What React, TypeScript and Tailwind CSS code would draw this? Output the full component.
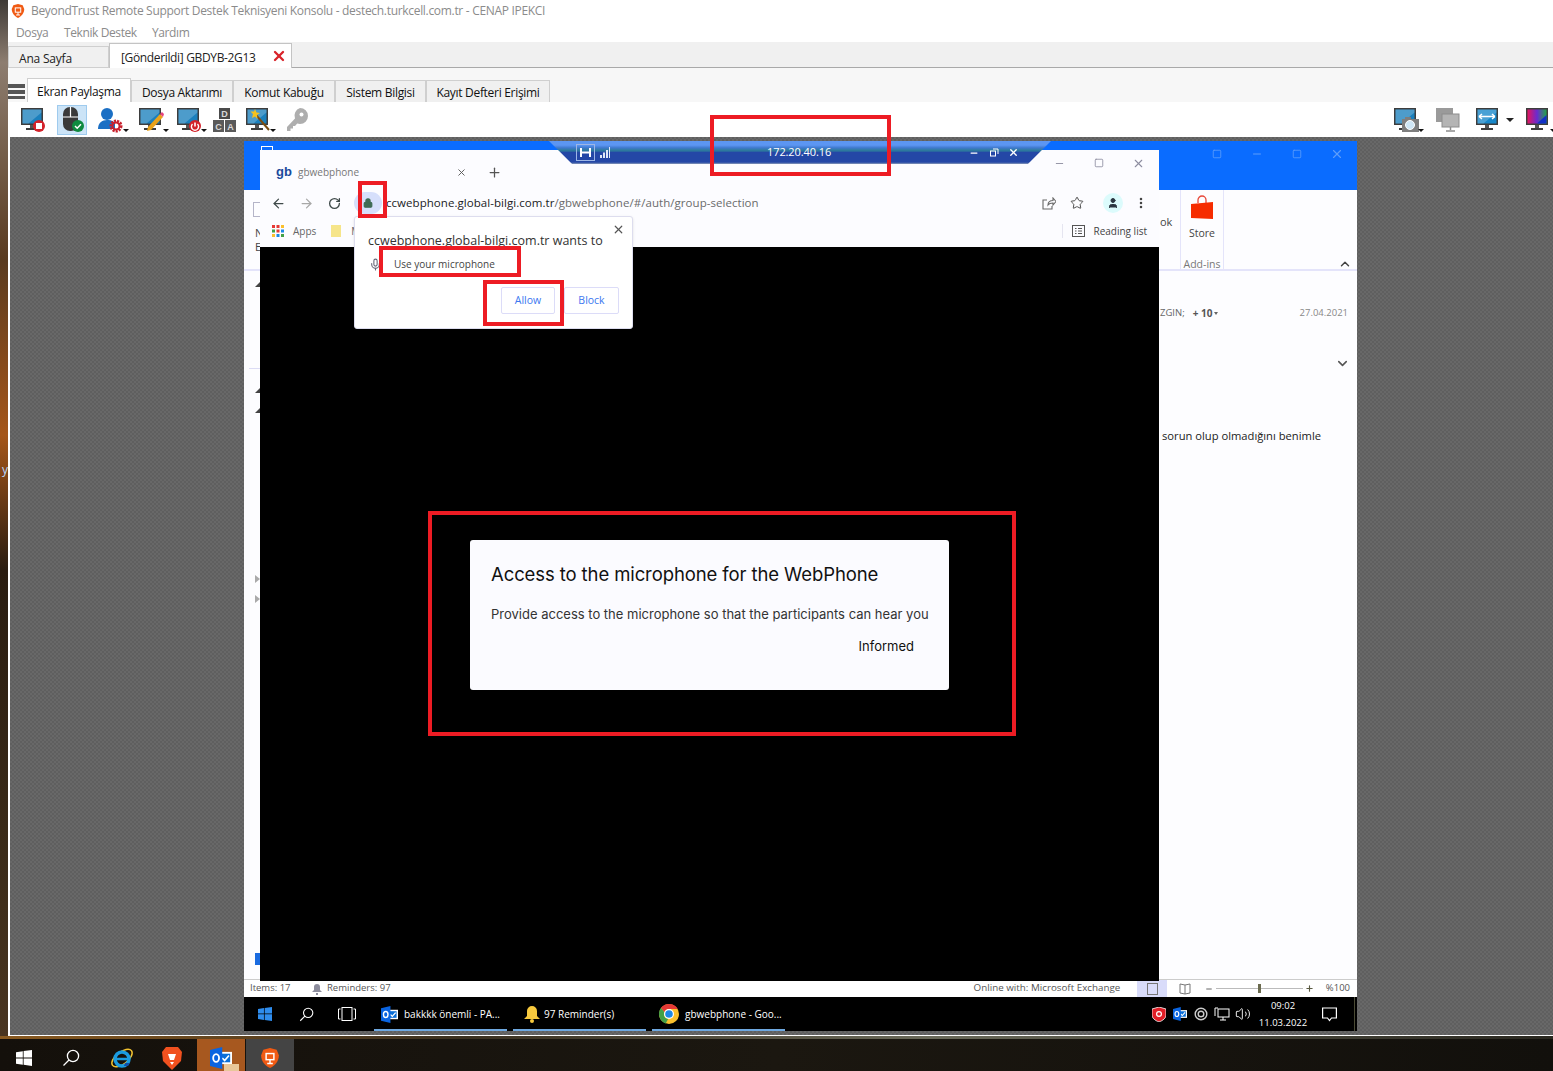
import type { ReactNode } from "react";
import { ArrowLeft, ArrowRight, ChevronDown, ChevronUp, Lock, Mic, Minus, MoreVertical, Plus, RotateCw, Square, Star, User, Volume2, X } from "lucide-react";

/* ---------- small drawings ---------- */

function Caret() {
  return <span className="absolute bottom-[3px] right-[-3px] h-0 w-0 border-x-[3px] border-t-[3px] border-x-transparent border-t-[#111]" />;
}

function Monitor({ children, screen = "#1b80bd" }: { children?: ReactNode; screen?: string }) {
  return (
    <svg width="26" height="26" viewBox="0 0 26 26">
      <rect x="1" y="1" width="22" height="17" fill="#3d3d3d" />
      <rect x="2.5" y="2.5" width="19" height="14" fill={screen} />
      <path d="M2.5 2.5h19v3l-13 11h-6z" fill="#fff" opacity=".22" />
      <rect x="10" y="18" width="4" height="3" fill="#555" />
      <rect x="6" y="21" width="12" height="2" fill="#3d3d3d" />
      {children}
    </svg>
  );
}

function WinLogo({ color, size = 16 }: { color: string; size?: number }) {
  return (
    <svg width={size} height={size} viewBox="0 0 16 16" fill={color}>
      <path d="M0 2.2 6.8 1.2v6.3H0zM7.6 1.1 16 0v7.5H7.6zM0 8.4h6.8v6.4L0 13.8zM7.6 8.4H16V16l-8.4-1.2z" />
    </svg>
  );
}

function SearchGlass({ size = 16 }: { size?: number }) {
  return (
    <svg width={size} height={size} viewBox="0 0 18 18" fill="none" stroke="#fff" strokeWidth="1.3">
      <circle cx="11" cy="7" r="5.6" />
      <path d="M7 11 1.5 16.5" />
    </svg>
  );
}

function OutlookLogo({ size = 18 }: { size?: number }) {
  return (
    <svg width={size} height={size} viewBox="0 0 18 18">
      <rect x="7" y="4" width="11" height="10" fill="#fff" />
      <rect x="8.5" y="5.5" width="8" height="7" fill="#0a6fd8" />
      <path d="m10 9 2 2 3.5-4" fill="none" stroke="#fff" strokeWidth="1.4" />
      <path d="M0 2.5 10 0v18L0 15.5z" fill="#0a64e0" />
      <ellipse cx="5" cy="9" rx="2.4" ry="3.2" fill="none" stroke="#fff" strokeWidth="1.5" />
    </svg>
  );
}

function ChromeLogo() {
  return (
    <svg width="20" height="20" viewBox="0 0 20 20">
      <circle cx="10" cy="10" r="10" fill="#fbc02d" />
      <path d="M10 0a10 10 0 0 1 8.7 5H10a5 5 0 0 0-4.6 3L1.9 4.1A10 10 0 0 1 10 0z" fill="#e53935" />
      <path d="M1.9 4.1 5.4 8a5 5 0 0 0 3.7 7l-2.4 4.4A10 10 0 0 1 1.9 4.1z" fill="#43a047" />
      <circle cx="10" cy="10" r="5" fill="#fff" />
      <circle cx="10" cy="10" r="3.8" fill="#1e88e5" />
    </svg>
  );
}

function BeyondShield({ size = 16, color = "#f05a13" }: { size?: number; color?: string }) {
  return (
    <svg width={size} height={size} viewBox="0 0 16 18">
      <path d="M2 1.5 8 0l6 1.5 2 5c0 5-3 9-8 11.5-5-2.5-8-6.500-8-11.500z" fill={color} />
      <rect x="4.500" y="5" width="7" height="5.500" fill="none" stroke="#fff" strokeWidth="1.300" />
      <path d="M8 10.500v3M5.500 14h5" stroke="#fff" strokeWidth="1.300" />
    </svg>
  );
}

function ToolIcon({ children, caret, active, dim }: { children: ReactNode; caret?: boolean; active?: boolean; dim?: boolean }) {
  return (
    <span className={`relative flex h-[30px] w-[30px] items-center justify-center ${active ? "border border-[#9fcbee] bg-[#cce4f7]" : ""} ${dim ? "opacity-90" : ""}`}>
      {children}
      {caret && <Caret />}
    </span>
  );
}

const RedBadge = ({ children }: { children: ReactNode }) => (
  <>
    <circle cx="19" cy="19" r="6" fill="#d3222a" />
    {children}
  </>
);

function Annotation({ className }: { className: string }) {
  return <div className={`pointer-events-none absolute z-30 border-[4px] border-[#ed1c24] ${className}`} />;
}

/* ---------- console chrome ---------- */

const featureTabs = [
  { label: "Dosya Aktarımı", w: "w-[102px]" },
  { label: "Komut Kabuğu", w: "w-[102px]" },
  { label: "Sistem Bilgisi", w: "w-[91px]" },
  { label: "Kayıt Defteri Erişimi", w: "w-[124px]" },
];

function ConsoleHeader() {
  return (
    <>
      <div className="flex h-[21px] items-center gap-[6px] bg-white pl-[3px] text-[12px] text-[#8b8b8b]">
        <BeyondShield size={14} />
        <span className="tracking-[-0.31px]">BeyondTrust Remote Support Destek Teknisyeni Konsolu - destech.turkcell.com.tr - CENAP IPEKCI</span>
      </div>
      <div className="flex h-[21px] items-center bg-white pl-[8px] pt-[3px] text-[12px] tracking-[-0.4px] text-[#8b8b8b]">
        <span className="w-[48px]">Dosya</span>
        <span className="w-[88px]">Teknik Destek</span>
        <span>Yardım</span>
      </div>
      <div className="flex h-[26px] items-end border-b border-[#a9a9a9] bg-[#f0f0f0] text-[12px] text-[#222]">
        <div className="mb-[-1px] flex h-[22px] w-[101px] items-center border border-[#cfcfcf] bg-[#f0f0f0] pl-[10px] pt-[3px] tracking-[-0.2px]">Ana Sayfa</div>
        <div className="mb-[-1px] flex h-[25px] w-[183px] items-center whitespace-nowrap border border-b-0 border-[#c4c4c4] bg-white pl-[11px] pt-[3px] tracking-[-0.35px]">
          <span>[Gönderildi] GBDYB-2G13</span>
          <X size={16} strokeWidth={3.5} className="ml-[16px] -translate-y-[2px] text-[#d8232a]" />
        </div>
      </div>
      <div className="flex h-[34px] items-end bg-[#f7f7f7] text-[12px] tracking-[-0.3px] text-[#111]">
        <div className="mb-[3px] mr-[2px] flex w-[17px] flex-col gap-[2px]">
          <span className="h-[4px] bg-[#555]" />
          <span className="h-[4px] bg-[#555]" />
          <span className="h-[3px] bg-[#555]" />
        </div>
        <div className="flex h-[24px] w-[104px] items-center justify-center border border-b-0 border-[#cfcfcf] bg-white pt-[2px]">Ekran Paylaşma</div>
        {featureTabs.map((t) => (
          <div key={t.label} className={`flex h-[22px] items-center justify-center border border-b-0 border-[#cfcfcf] bg-[#f0f0f0] pt-[2px] ${t.w}`}>
            {t.label}
          </div>
        ))}
      </div>
    </>
  );
}

function Toolbar() {
  return (
    <div className="flex h-[35px] items-center bg-white pl-[10px]">
      <div className="flex items-center">
        <ToolIcon>
          <Monitor>
            <circle cx="19" cy="19" r="6" fill="#d3222a" />
            <rect x="16" y="16" width="6" height="6" fill="#fff" />
          </Monitor>
        </ToolIcon>
        <span className="w-[9px]" />
        <ToolIcon active>
          <svg width="26" height="28" viewBox="0 0 26 28">
            <rect x="4" y="1" width="15" height="24" rx="7" fill="#3a3a3a" />
            <path d="M4 11h15M11.500 1v10" stroke="#fff" strokeWidth="1.200" />
            <circle cx="19" cy="20" r="6" fill="#0f8a3f" />
            <path d="m16 20 2.200 2.200 3.800-4" stroke="#fff" strokeWidth="1.500" fill="none" />
          </svg>
        </ToolIcon>
        <span className="w-[9px]" />
        <ToolIcon caret>
          <svg width="28" height="26" viewBox="0 0 28 26">
            <circle cx="10" cy="7" r="6" fill="#1b6fc4" />
            <path d="M1 22c0-6 4-9 9-9s8 2 8 4v5z" fill="#1b6fc4" />
            <circle cx="19" cy="19" r="5" fill="none" stroke="#c8202c" strokeWidth="3" strokeDasharray="2 1" />
            <circle cx="19" cy="19" r="3.500" fill="none" stroke="#c8202c" strokeWidth="2" />
          </svg>
        </ToolIcon>
        <span className="w-[10px]" />
        <ToolIcon caret>
          <Monitor>
            <path d="m9 24 1-4 12-13 3 3-12 13z" fill="#e9a21a" />
            <path d="m22 7 2-2 2 2-1 3z" fill="#e6457f" />
          </Monitor>
        </ToolIcon>
        <span className="w-[8px]" />
        <ToolIcon caret>
          <Monitor>
            <RedBadge>
              <path d="M19 15.500v4" stroke="#fff" strokeWidth="1.600" />
              <path d="M16.500 17a3.600 3.600 0 1 0 5 0" stroke="#fff" strokeWidth="1.400" fill="none" />
            </RedBadge>
          </Monitor>
        </ToolIcon>
        <span className="w-[5px]" />
        <ToolIcon>
          <svg width="26" height="26" viewBox="0 0 26 26" fontFamily="Liberation Sans" fontSize="9" fontWeight="700" fill="#d8d8d8" textAnchor="middle">
            <rect x="8" y="1" width="11" height="11" fill="#4a4a4a" />
            <rect x="2" y="13" width="11" height="12" fill="#5a5a5a" />
            <rect x="14" y="13" width="11" height="12" fill="#5a5a5a" />
            <text x="13.500" y="10">D</text>
            <text x="7.500" y="23">C</text>
            <text x="19.500" y="23">A</text>
          </svg>
        </ToolIcon>
        <span className="w-[4px]" />
        <ToolIcon caret>
          <Monitor>
            <path d="m11 8 13 15" stroke="#7a4d12" strokeWidth="2" />
            <path d="m10 2 1.500 3.500L15 6l-3 2 .5 4-2.500-2.500L7 11l1-4-2.500-2.500L9 4.500z" fill="#f6c21c" />
          </Monitor>
        </ToolIcon>
        <span className="w-[9px]" />
        <ToolIcon dim>
          <svg width="24" height="26" viewBox="0 0 24 26" fill="#a6a6a6">
            <path d="M15 1a8 8 0 0 1 0 16c-1 0-2-.2-2.800-.5L10 19H8v2.500H5.500V24H2v-4l8-8.500A8 8 0 0 1 15 1z" />
            <circle cx="16.500" cy="7.500" r="2" fill="#fff" />
          </svg>
        </ToolIcon>
      </div>
      <div className="ml-auto flex items-center">
        <ToolIcon caret>
          <Monitor>
            <rect x="9" y="12" width="17" height="13" fill="#7e7e7e" />
            <rect x="12" y="10" width="6" height="3" fill="#7e7e7e" />
            <circle cx="17" cy="18" r="4.500" fill="#cfe6f5" stroke="#fff" />
          </Monitor>
        </ToolIcon>
        <span className="w-[12px]" />
        <ToolIcon>
          <svg width="26" height="26" viewBox="0 0 26 26">
            <rect x="1" y="1" width="17" height="14" fill="#9a9a9a" />
            <rect x="7" y="7" width="17" height="13" fill="#b4b4b4" stroke="#8c8c8c" />
            <path d="M15.500 20v3M11 24h9" stroke="#8c8c8c" strokeWidth="1.500" />
          </svg>
        </ToolIcon>
        <span className="w-[10px]" />
        <ToolIcon>
          <Monitor screen="#1787c9">
            <path d="M4 9.500h16M4 9.500l3-2.500M4 9.500l3 2.500M20 9.500l-3-2.500M20 9.500l-3 2.500" stroke="#fff" strokeWidth="1.500" fill="none" />
          </Monitor>
        </ToolIcon>
        <span className="ml-[3px] mr-[9px] h-0 w-0 border-x-[4px] border-t-[4px] border-x-transparent border-t-[#222]" />
        <ToolIcon caret>
          <svg width="26" height="26" viewBox="0 0 26 26">
            <defs>
              <linearGradient id="rainbow" x1="0" x2="1" y1="0" y2="0">
                <stop offset="0" stopColor="#e6135e" />
                <stop offset=".5" stopColor="#6a2bd0" />
                <stop offset="1" stopColor="#1fa64a" />
              </linearGradient>
            </defs>
            <rect x="1" y="1" width="22" height="17" fill="#3d3d3d" />
            <rect x="2.500" y="2.500" width="19" height="14" fill="url(#rainbow)" />
            <path d="M12 16.500 21.500 8v8.500z" fill="#1130c8" />
            <rect x="10" y="18" width="4" height="3" fill="#555" />
            <rect x="6" y="21" width="12" height="2" fill="#3d3d3d" />
          </svg>
        </ToolIcon>
      </div>
    </div>
  );
}

/* ---------- remote desktop: outlook behind, chrome on top ---------- */

function OutlookBackdrop() {
  return (
    <>
      <div className="relative flex h-[49px] bg-[#0a6cff] pl-[961px] text-[#5d9dfa]">
        <span className="absolute left-[17px] top-[5px] h-[5px] w-[12px] border border-white" />
        <div className="flex h-[26px] w-full items-center">
          <span className="flex w-[24px] justify-center"><Square size={10} /></span>
          <span className="ml-[16px] flex w-[24px] justify-center"><Minus size={12} /></span>
          <span className="ml-[16px] flex w-[24px] justify-center"><Square size={10} /></span>
          <span className="ml-[16px] flex w-[24px] justify-center"><X size={14} /></span>
        </div>
      </div>
      <div className="relative flex h-[81px] border-b-2 border-[#e4e4fa] bg-[#fdfdff] pl-[916px] text-[10.5px] leading-[14px] text-[#555]">
        <span className="absolute left-[9px] top-[12px] h-[15px] w-[8px] border border-[#b5b5c8]" />
        <span className="absolute left-[11px] top-[36px] text-[11px] leading-[14px] text-[#444]">N<br />E</span>
        <div className="w-[20px] pt-[25px] text-[11px] text-[#444]">ok</div>
        <div className="flex w-[44px] flex-col items-center border-x border-[#e4e4fa] pt-[5px]">
          <svg width="24" height="26" viewBox="0 0 24 26" className="shrink-0">
            <path d="M8 8V5a4 4 0 0 1 8 0v3" fill="none" stroke="#e8483a" strokeWidth="1.300" />
            <path d="M1 9l22-2v17l-22-1z" fill="#f62c00" />
          </svg>
          <span className="mt-[5px] text-[#444]">Store</span>
          <span className="mt-[17px] whitespace-nowrap text-[#777]">Add-ins</span>
        </div>
        <ChevronUp size={14} strokeWidth={2.5} className="ml-auto mr-[5px] mt-[67px] text-[#444]" />
      </div>
      <div className="relative flex flex-1 flex-col bg-[#fdfdff] pl-[916px] pr-[9px] pt-[35px]">
        <span className="absolute left-[5px] right-[1097px] top-[97px] h-px bg-[#dcdcf5]" />
        <span className="absolute left-[11px] top-[11px] h-0 w-0 border-x-[5px] border-b-[5px] border-x-transparent border-b-[#444]" />
        <span className="absolute left-[11px] top-[117px] h-0 w-0 border-x-[5px] border-b-[5px] border-x-transparent border-b-[#444]" />
        <span className="absolute left-[11px] top-[137px] h-0 w-0 border-x-[5px] border-b-[5px] border-x-transparent border-b-[#444]" />
        <span className="absolute left-[11px] top-[304px] h-0 w-0 border-y-[4px] border-l-[5px] border-y-transparent border-l-[#aaa]" />
        <span className="absolute left-[11px] top-[324px] h-0 w-0 border-y-[4px] border-l-[5px] border-y-transparent border-l-[#aaa]" />
        <span className="absolute left-[11px] top-[682px] h-[12px] w-[6px] bg-[#1a6be0]" />
        <div className="flex h-[14px] items-center text-[9.5px] text-[#666]">
          <span>ZGIN;</span>
          <span className="ml-[8px] text-[10px] font-bold text-[#555]">+ 10</span>
          <span className="ml-[2px] h-0 w-0 border-x-[2.500px] border-t-[3px] border-x-transparent border-t-[#666]" />
          <span className="ml-auto text-[#888]">27.04.2021</span>
        </div>
        <ChevronDown size={15} strokeWidth={2.5} className="mt-[36px] -mr-[2px] self-end text-[#555]" />
        <div className="ml-[2px] mt-[57px] whitespace-nowrap text-[11.2px] leading-[16px] text-[#222]">sorun olup olmadığını benimle</div>
      </div>
      <div className="flex h-[18px] items-center border-t border-[#ccc] bg-white pl-[6px] text-[9.500px] text-[#555]">
        <span className="w-[62px]">Items: 17</span>
        <svg width="10" height="12" viewBox="0 0 10 12" fill="#8c8c9c" className="mr-[5px]"><path d="M5 1a3 3 0 0 1 3 3v3l2 2H0l2-2V4a3 3 0 0 1 3-3zM4 10h2v2H4z" /></svg>
        <span>Reminders: 97</span>
        <span className="ml-[583px] w-[146px] whitespace-nowrap text-[9.800px]">Online with: Microsoft Exchange</span>
        <span className="ml-[17px] flex h-[17px] w-[30px] items-center justify-center bg-[#d9dcfa]">
          <span className="ml-[2px] h-[12px] w-[11px] border border-[#777]" />
        </span>
        <svg width="12" height="12" viewBox="0 0 12 12" fill="none" stroke="#777" className="ml-[12px]"><path d="M6 2 1 1v9l5 1 5-1V1zM6 2v9" /></svg>
        <Minus size={8} strokeWidth={3} className="ml-[14px] text-[#666]" />
        <span className="relative ml-[3px] h-px w-[87px] bg-[#bbb]">
          <span className="absolute left-[42px] top-[-4px] h-[9px] w-[3px] bg-[#6b6b4f]" />
        </span>
        <Plus size={9} strokeWidth={3} className="ml-[2px] text-[#5a5a42]" />
        <span className="ml-auto pr-[7px]">%100</span>
      </div>
      <RemoteTaskbar />
    </>
  );
}

const remoteApps = [
  { label: "bakkkk önemli - PA...", w: "w-[133px]", icon: <OutlookLogo size={17} />, gap: "gap-[6px]" },
  {
    label: "97 Reminder(s)",
    w: "w-[133px]",
    gap: "gap-[3px]",
    icon: (
      <svg width="18" height="18" viewBox="0 0 18 18" fill="#f7c93e" className="ml-[3px]"><path d="M9 1a5 5 0 0 1 5 5v5l3 3H1l3-3V6a5 5 0 0 1 5-5z" /><circle cx="9" cy="16" r="2" /></svg>
    ),
  },
  { label: "gbwebphone - Goo...", w: "w-[133px]", icon: <ChromeLogo />, gap: "gap-[6px]" },
];

function RemoteTaskbar() {
  return (
    <div className="flex h-[34px] items-center bg-black pl-[14px] text-[10px] text-white">
      <WinLogo color="#2f8dee" size={14} />
      <span className="ml-[27px]"><SearchGlass size={15} /></span>
      <svg width="18" height="14" viewBox="0 0 18 14" fill="none" stroke="#fff" className="ml-[24px]"><rect x="4" y=".5" width="10" height="13" /><path d="M2.500 2H.500v10h2M15.500 2h2v10h-2" /></svg>
      <div className="ml-[18px] flex">
        {remoteApps.map((a, i) => (
          <div key={a.label} className={`flex h-[34px] items-center border-b-2 border-[#6ea8e0] pl-[7px] pt-[2px] ${a.gap} ${a.w} ${i > 0 ? "ml-[6px]" : ""}`}>
            {a.icon}
            <span className="whitespace-nowrap">{a.label}</span>
          </div>
        ))}
      </div>
      <div className="ml-auto flex items-center">
        <svg width="14" height="15" viewBox="0 0 14 15"><path d="M0 2 7 0l7 2v6c0 3-3 5.500-7 7-4-1.500-7-4-7-7z" fill="#e01e26" stroke="#fff" strokeWidth=".8" /><circle cx="7" cy="7" r="3" fill="#fff" /><circle cx="7" cy="7" r="1.800" fill="#e01e26" /></svg>
        <span className="ml-[7px]"><OutlookLogo size={14} /></span>
        <svg width="14" height="14" viewBox="0 0 14 14" fill="none" stroke="#ccc" strokeWidth="1.400" className="ml-[7px]"><circle cx="7" cy="7" r="5.800" /><circle cx="7" cy="7" r="2.800" /></svg>
        <svg width="16" height="14" viewBox="0 0 16 14" fill="none" stroke="#fff" className="ml-[6px]"><rect x="4" y="2" width="11" height="8" /><path d="M1 1h3M1 1v8M9 10v3M6 13h6" /></svg>
        <Volume2 size={16} strokeWidth={1.400} className="ml-[5px]" />
        <div className="ml-[8px] flex w-[48px] flex-col items-center text-[9.500px] leading-[17px]">
          <span>09:02</span>
          <span>11.03.2022</span>
        </div>
        <svg width="15" height="15" viewBox="0 0 15 15" fill="none" stroke="#fff" strokeWidth="1.200" className="ml-[15px]"><path d="M.600 1h13.800v10H9.500l-2 2.500-2-2.500H.600z" /></svg>
        <span className="ml-[17px] mr-[2px] h-[34px] w-px bg-[#4a4a34]" />
      </div>
    </div>
  );
}

function ChromeWindow() {
  return (
    <div className="absolute left-[16px] top-[9px] z-10 flex h-[831px] w-[899px] flex-col bg-[#fcfcff]">
      <div className="flex h-[38px] items-center pl-[16px] pt-[6px]">
        <span className="w-[22px] font-['Liberation_Sans',sans-serif] text-[13px] font-bold text-[#1a4a9c]">gb</span>
        <span className="w-[158px] text-[10px] text-[#777]">gbwebphone</span>
        <X size={11} className="text-[#555]" />
        <Plus size={15} className="ml-[20px] text-[#555]" />
        <div className="ml-auto flex -translate-y-[9px] items-center text-[#8d8da0]">
          <Minus size={11} className="mr-[29px]" />
          <Square size={10} className="mr-[28px]" />
          <X size={13} className="mr-[14px]" />
        </div>
      </div>
      <div className="flex h-[30px] items-center pl-[4px] pr-[11px] text-[11.500px]">
        <span className="flex w-[28px] justify-center"><ArrowLeft size={15} className="text-[#3f4a4a]" /></span>
        <span className="flex w-[28px] justify-center"><ArrowRight size={15} className="text-[#a8a8a8]" /></span>
        <span className="flex w-[28px] justify-center"><RotateCw size={13} strokeWidth={2.400} className="text-[#3f4a4a]" /></span>
        <span className="ml-[6px] flex h-[22px] w-[28px] items-center justify-center rounded-full bg-[#d6dffb]">
          <Lock size={10} strokeWidth={3} fill="#3f6b55" className="text-[#3f6b55]" />
        </span>
        <span className="ml-[4px] whitespace-nowrap tracking-[0.05px] text-[#202124]">
          ccwebphone.global-bilgi.com.tr<span className="text-[#6b6b6b]">/gbwebphone/#/auth/group-selection</span>
        </span>
        <div className="ml-auto flex items-center text-[#55555f]">
          <svg width="14" height="13" viewBox="0 0 14 13" fill="none" stroke="#666" strokeWidth="1.100">
            <path d="M5 3H1v9h9V9M6 8c0-3 2-4.500 5-4.500V1l3 3.500L11 8V6C9 6 7 6.500 6 8z" />
          </svg>
          <Star size={14} strokeWidth={1.600} className="ml-[14px] text-[#444]" />
          <span className="ml-[19px] flex h-[20px] w-[20px] items-center justify-center rounded-full bg-[#dcfbfc]">
            <User size={12} fill="#2a3540" className="text-[#2a3540]" />
          </span>
          <MoreVertical size={14} strokeWidth={2.400} className="ml-[11px] text-[#444]" />
        </div>
      </div>
      <div className="flex h-[29px] items-center pb-[3px] pl-[12px] pr-[12px] text-[10px] text-[#666]">
        <svg width="12" height="12" viewBox="0 0 12 12">
          {[0, 1, 2].flatMap((r) =>
            [0, 1, 2].map((c) => (
              <rect key={`${r}${c}`} x={c * 4.500} y={r * 4.500} width="3" height="3" fill={["#e53935", "#e53935", "#fbc02d", "#43a047", "#e53935", "#1e88e5", "#fbc02d", "#1e88e5", "#43a047"][r * 3 + c]} />
            )),
          )}
        </svg>
        <span className="ml-[9px]">Apps</span>
        <span className="ml-[15px] h-[12px] w-[10px] bg-[#f6e58a]" />
        <span className="ml-[10px]">M</span>
        <span className="ml-auto h-[14px] w-px bg-[#e5e5f0]" />
        <svg width="13" height="12" viewBox="0 0 13 12" fill="none" stroke="#555" className="ml-[9px]"><rect x=".5" y=".5" width="12" height="11" /><path d="M3 3.500h1.500M6 3.500h4M3 6h1.500M6 6h4M3 8.500h1.500M6 8.500h4" /></svg>
        <span className="ml-[8px] text-[#444]">Reading list</span>
      </div>
      <div className="flex flex-1 items-center justify-center bg-black pt-[2px]">
        <div className="flex h-[150px] w-[479px] flex-col rounded-[3px] bg-[#fbfbff] pl-[21px] pr-[35px] pt-[22px] font-['Inter',sans-serif] text-[#111]">
          <div className="text-[18.500px] leading-[24px] tracking-[-0.1px]">Access to the microphone for the WebPhone</div>
          <div className="mt-[19px] whitespace-nowrap text-[13px] leading-[18px] text-[#333]">Provide access to the microphone so that the participants can hear you</div>
          <div className="mt-[14px] self-end text-[13px] leading-[18px]">Informed</div>
        </div>
      </div>
      {/* permission bubble */}
      <div className="absolute left-[94px] top-[66px] h-[113px] w-[279px] rounded-[3px] border border-[#dde] bg-white px-[13px] pt-[15px] shadow-sm">
        <X size={13} strokeWidth={2.200} className="absolute right-[7px] top-[6px] text-[#555]" />
        <div className="whitespace-nowrap text-[12.500px] leading-[18px] text-[#333]">ccwebphone.global-bilgi.com.tr wants to</div>
        <div className="mt-[6px] flex h-[16px] items-center text-[10px] text-[#444]">
          <Mic size={13} className="ml-[1px] text-[#667]" />
          <span className="ml-[12px]">Use your microphone</span>
        </div>
        <div className="mt-[15px] flex justify-end gap-[9px] text-[10.500px] text-[#3c78f0]">
          <span className="flex h-[27px] w-[54px] items-center justify-center rounded-[2px] border border-[#dcdcf8]">Allow</span>
          <span className="flex h-[27px] w-[55px] items-center justify-center rounded-[2px] border border-[#dcdcf8]">Block</span>
        </div>
      </div>
    </div>
  );
}

function ConnectionBar() {
  return (
    <div className="absolute left-[305px] top-0 z-20 flex h-[23px] w-[502px] items-center bg-[linear-gradient(#5c96f2_0%,#5c96f2_18%,#3f78cc_30%,#2e7d9e_40%,#2a6aa0_45%,#2447a6_50%,#2447a6_92%,#8a9ab8_100%)] pl-[27px] text-white [clip-path:polygon(0_0,100%_0,95.400%_100%,4.600%_100%)]">
      <span className="flex h-[17px] w-[19px] items-center justify-center border border-[#9db6e6]">
        <svg width="11" height="9" viewBox="0 0 11 9" fill="#fff"><path d="M0 0h2v9H0zM2 3.500h7v2H2zM9 0h2v9H9z" /></svg>
      </span>
      <svg width="10" height="11" viewBox="0 0 10 11" fill="#dfe8f8" className="ml-[5px]"><path d="M0 8h2v3H0zM3 5.500h2V11H3zM6 3h2v8H6zM9 0h1v11H9z" /></svg>
      <span className="ml-[157px] text-[11px] tracking-[-0.1px]">172.20.40.16</span>
      <Minus size={10} strokeWidth={3} className="ml-[138px]" />
      <svg width="9" height="9" viewBox="0 0 9 9" fill="none" stroke="#fff" className="ml-[11px]"><rect x=".5" y="3" width="5" height="5" /><path d="M3 1h5v5" /></svg>
      <X size={11} strokeWidth={3} className="ml-[9px]" />
    </div>
  );
}

function RemoteArea() {
  return (
    <div className="relative flex flex-1 border-b border-l-2 border-white bg-[#646464] bg-[conic-gradient(#5f5f5f_25%,#686868_0_50%,#5f5f5f_0_75%,#686868_0)] bg-[length:4px_4px] pb-[4px] pl-[234px] pt-[4px]">
      <div className="relative flex w-[1113px] flex-col">
        <OutlookBackdrop />
        <ChromeWindow />
        <ConnectionBar />
      </div>
    </div>
  );
}

function HostTaskbar() {
  return (
    <div className="flex h-[32px] items-center bg-[linear-gradient(90deg,#14100b,#1b1710_50%,#12100c)] pl-[16px]">
      <span className="mt-[6px]"><WinLogo color="#fff" size={16} /></span>
      <span className="ml-[30px] mt-[6px]"><SearchGlass size={18} /></span>
      <span className="ml-[30px] mt-[6px] flex h-[24px] w-[24px] items-center justify-center">
        <svg width="24" height="24" viewBox="0 0 24 24" fill="none">
          <ellipse cx="12" cy="12" rx="12" ry="6" transform="rotate(-38 12 12)" stroke="#f2c230" strokeWidth="1.500" />
          <circle cx="12" cy="13" r="7" stroke="#1b9ce0" strokeWidth="3.500" />
          <path d="M5 13h13" stroke="#1b9ce0" strokeWidth="2.500" />
          <path d="M15 17h5l-2 3h-4z" fill="#0f4fa8" />
        </svg>
      </span>
      <span className="ml-[28px] mt-[6px]">
        <svg width="20" height="24" viewBox="0 0 20 24">
          <path d="M4 1h12l4 5-1 9-9 9-9-9-1-9z" fill="#f1511f" />
          <path d="M6 8h8l-2 6h-4zM8 16h4l-2 3z" fill="#fff" />
        </svg>
      </span>
      <span className="ml-[15px] flex h-[32px] w-[48px] items-center justify-center bg-[#a7581f] pt-[6px]">
        <span className="relative">
          <OutlookLogo size={22} />
          <span className="absolute bottom-[-8px] right-[-7px] h-[13px] w-[15px] bg-[#e8c79a]" />
        </span>
      </span>
      <span className="ml-px flex h-[32px] w-[48px] items-center justify-center bg-[#444] pt-[6px]">
        <BeyondShield size={20} />
      </span>
    </div>
  );
}

export default function App() {
  return (
    <div className="relative flex h-[1071px] w-[1553px] flex-col overflow-hidden bg-[#16120d] font-['Open_Sans',sans-serif]">
      <div className="flex h-[1036px]">
        <div className="relative w-[8px] bg-[linear-gradient(#3e3a36_0%,#8d7d70_6%,#5a3b1f_25%,#a5561a_42%,#2a1c10_55%,#3a2a18_80%,#4a3520_100%)]">
          <span className="absolute left-[2px] top-[461px] text-[12px] text-[#b8d8ff]">y</span>
        </div>
        <div className="flex flex-1 flex-col">
          <ConsoleHeader />
          <Toolbar />
          <RemoteArea />
        </div>
      </div>
      <div className="h-[3px] bg-[linear-gradient(90deg,#8a5a20,#3a3020_30%,#6a6a5a_60%,#2a2820)]" />
      <HostTaskbar />

      <Annotation className="left-[710px] top-[115px] h-[61px] w-[181px]" />
      <Annotation className="left-[358px] top-[181px] h-[37px] w-[29px]" />
      <Annotation className="left-[379px] top-[246px] h-[31px] w-[142px]" />
      <Annotation className="left-[483px] top-[280px] h-[46px] w-[81px]" />
      <Annotation className="left-[428px] top-[511px] h-[225px] w-[588px]" />
    </div>
  );
}
